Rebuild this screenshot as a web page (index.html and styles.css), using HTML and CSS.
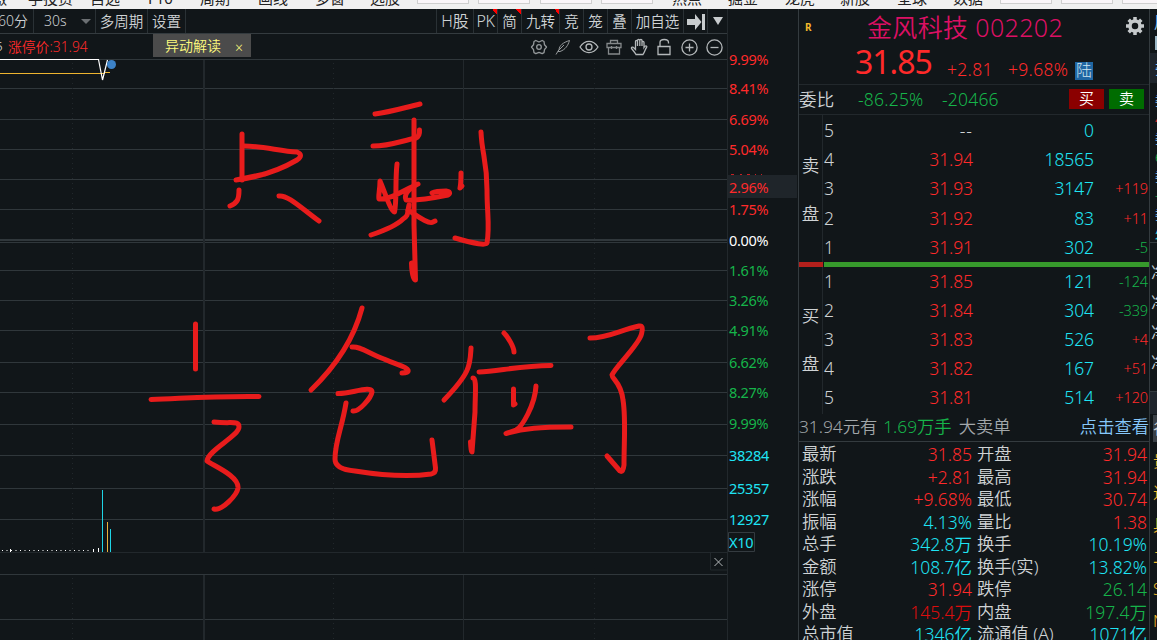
FILE: index.html
```html
<!DOCTYPE html>
<html lang="zh-CN">
<head>
<meta charset="utf-8">
<title>金风科技 002202</title>
<link rel="stylesheet" href="styles.css">
</head>
<body>
<div class="menu">
  <span>激</span><span>手投资</span><span>自选</span><span>F10</span><span>周期</span><span>画线</span><span>多窗</span><span>选股</span>
  <i></i><i></i><i></i><i></i>
  <span>热点</span><span>掘金</span><span>龙虎</span><span>新股</span><span>全球</span><span>数据</span>
  <i></i><i></i><i></i>
</div>
<div class="main">
  <div class="left">
    <div class="toolbar">
      <div class="btn m60">60分</div>
      <div class="btn s30">30s<b class="down gray"></b></div>
      <div class="btn w52">多周期</div>
      <div class="btn w38">设置</div>
      <div class="space"></div>
      <div class="btn first">H股</div>
      <div class="btn w24 new pk">PK</div>
      <div class="btn w24 new">简</div>
      <div class="btn w38 new">九转</div>
      <div class="btn w24">竞</div>
      <div class="btn w24">笼</div>
      <div class="btn w24">叠</div>
      <div class="btn w52">加自选</div>
      <div class="btn w24"><svg width="20" height="18"><path d="M1 6h8V1l6.500 8L9 17v-5H1z" fill="#c8ccce"/><path d="M17.500 1v16" stroke="#c8ccce" stroke-width="3"/></svg></div>
      <div class="btn last"><b class="down"></b></div>
    </div>
    <div class="info">
      <span class="six">5</span><span class="limit">涨停价:31.94</span>
      <div class="tab">异动解读<span>×</span></div>
      <svg class="icons" width="200" height="25" viewBox="525 34 200 25" fill="none" stroke="#b4b8ba" stroke-width="1.300">
        <path d="M535.800 40.500l3.200 1.500 3.200-1.500 1.800 1 .5 3.300 2 2.200-2 2.600-.5 3-1.800 1-3.200-1.300-3.200 1.300-1.800-1-.5-3-2-2.600 2-2.200.5-3.300z" stroke="#95999b" stroke-linejoin="round"/>
        <circle cx="539" cy="47" r="2.300" stroke="#95999b"/>
        <path d="M556 54.500l3-5c.5-4 4-7 10.500-9-1.500 5-4 9-9.500 11h-2M558 51l6-6" stroke="#95999b" stroke-width="1"/>
        <path d="M580 47c5-7.500 13-7.500 18 0-5 7.500-13 7.500-18 0z"/><circle cx="589" cy="47" r="3"/>
        <path d="M607 43.500h14v4h-14zM608.500 47.500v6.500h11v-6.500M610.500 43v-2.500h7V43M611.500 46v3m5-3v3" stroke="#85898b"/>
        <path d="M636 54.500c-1-2-3-4-4.500-6-.5-1.500 1.500-2 2.500-.5l1.500 1.500V41.500c0-1.500 2-1.500 2 0V46v-5.500c0-1.500 2.300-1.500 2.300 0V46v-5.500c0-1.500 2.200-1.500 2.200 0V46v-3.500c0-1.500 2-1.500 2 0v5c2-3 3.500-1 2.500 0-1.500 2-1.500 4-3.500 7z"/>
        <path d="M658 46.500h12v8h-12zM660 46.500v-4c0-4 8.500-4 8.500 0v1"/>
        <circle cx="689.500" cy="47.500" r="7.600"/><path d="M685.500 47.500h8m-4-4v8"/>
        <circle cx="714.500" cy="47.500" r="7.600"/><path d="M710.500 47.500h8"/>
      </svg>
    </div>
    <svg class="chart" width="798" height="581" viewBox="0 59 798 581">
      <g class="grid">
        <path d="M0 59.500H727M0 88.500H727M0 119.500H727M0 149.500H727M0 179.500H727M0 209.500H727M0 242.500H727M0 270.500H727M0 300.500H727M0 330.500H727M0 362.500H727M0 392.500H727M0 424.500H727M0 455.500H727M0 488.500H727M0 519.500H727M0 574.500H727M0 619.500H727"/>
        <path d="M0 240H727" stroke-width="2"/>
        <path class="dim" d="M0 552.500H727M727.500 9V640M463.500 60V552M463.500 575V640M710.500 553V570H727"/>
        <path class="dim" d="M204 60V552M204 575V640" stroke-width="2"/>
        <path class="dim dots" d="M72.500 63V552M333.500 63V552M594.500 63V552M72.500 578V640M333.500 578V640M594.500 578V640"/>
      </g>
      <rect x="728" y="175" width="69" height="23" fill="#1f252a"/>
      <g class="axis up">
        <text x="729" y="65">9.99%</text><text x="729" y="94">8.41%</text><text x="729" y="125">6.69%</text><text x="729" y="155">5.04%</text>
        <text x="729" y="193">2.96%</text><text x="729" y="215">1.75%</text>
      </g>
      <path d="M731 174.500h3m6 0h2m5 0h3m5 0h1m5 0h1" stroke="#c62023"/>
      <g class="axis"><text x="729" y="246">0.00%</text></g>
      <g class="axis dn">
        <text x="729" y="276">1.61%</text><text x="729" y="306">3.26%</text><text x="729" y="336">4.91%</text><text x="729" y="368">6.62%</text><text x="729" y="398">8.27%</text><text x="729" y="429">9.99%</text>
      </g>
      <g class="axis vol">
        <text x="729" y="461">38284</text><text x="729" y="494">25357</text><text x="729" y="525">12927</text><text x="729" y="548">X10</text>
      </g>
      <path d="M728.500 532.500h26v19h-26z" fill="none" stroke="#343b40"/>
      <path d="M714.500 558l8 8m0-8l-8 8" stroke="#b5b9bb"/>
      <!-- price line -->
      <path d="M0 73.500H105M105 72.500h5" stroke="#eeb42f"/>
      <path d="M0 59.500H98.500L102.500 80 107.500 60" fill="none" stroke="#fff" stroke-width="1.200"/>
      <circle cx="111.500" cy="64.500" r="4.500" fill="#3c82c8"/>
      <!-- volume -->
      <path d="M2 550.500H92" stroke="#fff" stroke-dasharray="1 3.500"/>
      <path d="M10.500 549v3M93.500 549v3M98.500 548v4" stroke="#fff"/>
      <path d="M102.500 490v62M110.500 529v23" stroke="#1fd5e6"/><path d="M107.500 522v30" stroke="#e9b23a"/>
      <!-- pen marks -->
      <g class="ink">
        <path d="M242 134V180"/><path d="M244 146C262 146 280 151 297 152Q304 155 297 160C280 170 260 177 236 180L265 174"/>
        <path d="M239 190C239 200 237 203 230 206"/><path d="M279 196C288 195 300 207 319 221"/>
        <path d="M375 114C391 112 403 108 420 104"/><path d="M373 146C390 146 401 141 416 138Q420 136 419.500 130"/>
        <path d="M414 120V225L415.500 280Q412 280 411.500 263"/>
        <path d="M397 164C395 182 397 200 394.500 212C391 212 384 190 380 181C380 190 378 197 379 199C390 200 404 190 418 184C411 187 403 194 406 200C420 201 438 197 448 195Q452 192 446 191Q436 191 432 193"/>
        <path d="M409 205C407 214 409 215 403 219C397 225 383 231 371 235"/><path d="M408 210C416 215 429 225 433 222L435 221"/>
        <path d="M461 173C461 180 461 184 460 188L462 186"/><path d="M481 132C482 155 487 160 487 190C487 215 490 225 487 243Q486 247 455 238"/>
        <path d="M195.500 324V369"/><path d="M151 399.500C190 398 210 396 259 396.500"/>
        <path d="M214 422C232 424 239 420 239 427C239 436 208 450 207 461C214 466 239 476 238 488C237 495 222 511 214 509"/>
        <path d="M362 308C354 338 337 365 311 390"/><path d="M352 347C360 346 368 353 384 359C397 365 406 366 408 370Q409 373 402 373"/>
        <path d="M338 393.500C350 394 372 385 372 392C371 398 359 412 353 411"/><path d="M346 403C342 428 335 441 335 459C335 467 343 470 355 471C380 475 410 477 431 474Q436 473 435.500 468L432 440"/>
        <path d="M471 348C470 365 471 372 444 400"/><path d="M473 378C477 378 475 395 475 412L472 452Q471 452 470.500 442"/>
        <path d="M504 333C508 337 514 347 514 352"/><path d="M479 372C499 371 519 366 551 365.500"/>
        <path d="M513.500 389V405L515 404"/><path d="M536 386C535 405 522 427 516 430L506 433.500C525 428 540 427 571 427"/>
        <path d="M590 338C608 338 620 330 639 326Q644 325 641.500 334C639 345 615 367 612 375C612 379 621 382 623 400C626 418 624 440 624 465Q623 473 620 471L607 456"/>
      </g>
    </svg>
  </div>
  <div class="quote">
    <div class="head">
      <div class="name"><em>R</em><span>金风科技 002202</span>
        <svg width="20" height="20" viewBox="-10 -10 20 20"><circle r="5" fill="none" stroke="#c5c9cb" stroke-width="3.500"/><path d="M0-9V-5M0 9V5M-9 0H-5M9 0H5M-6.300-6.300L-4-4M6.300 6.300L4 4M6.300-6.300L4-4M-6.300 6.300L-4 4" stroke="#c5c9cb" stroke-width="3.500"/></svg>
      </div>
      <div class="price"><strong>31.85</strong><span class="chg">+2.81</span><span class="pct">+9.68%</span><b>陆</b></div>
    </div>
    <div class="ratio"><span>委比</span><span class="g r1">-86.25%</span><span class="g">-20466</span><div class="buy">买</div><div class="sell">卖</div></div>
    <div class="book">
      <div class="side"><span>卖</span><span>盘</span></div>
      <div class="rows">
        <div><span>5</span><span class="w">--</span><span>0</span><span></span></div>
        <div><span>4</span><span>31.94</span><span>18565</span><span></span></div>
        <div><span>3</span><span>31.93</span><span>3147</span><span>+119</span></div>
        <div><span>2</span><span>31.92</span><span>83</span><span>+11</span></div>
        <div><span>1</span><span>31.91</span><span>302</span><span class="g">-5</span></div>
      </div>
    </div>
    <div class="bar"><i></i></div>
    <div class="book bids">
      <div class="side"><span>买</span><span>盘</span></div>
      <div class="rows">
        <div><span>1</span><span>31.85</span><span>121</span><span class="g">-124</span></div>
        <div><span>2</span><span>31.84</span><span>304</span><span class="g">-339</span></div>
        <div><span>3</span><span>31.83</span><span>526</span><span>+4</span></div>
        <div><span>4</span><span>31.82</span><span>167</span><span>+51</span></div>
        <div><span>5</span><span>31.81</span><span>514</span><span>+120</span></div>
      </div>
    </div>
    <div class="notice"><span>31.94元有</span><span class="g">1.69万手</span><span>大卖单</span><a>点击查看</a></div>
    <div class="stats">
      <span>最新</span><span class="r">31.85</span><span>开盘</span><span class="r">31.94</span>
      <span>涨跌</span><span class="r">+2.81</span><span>最高</span><span class="r">31.94</span>
      <span>涨幅</span><span class="r">+9.68%</span><span>最低</span><span class="r">30.74</span>
      <span>振幅</span><span class="c">4.13%</span><span>量比</span><span class="r">1.38</span>
      <span>总手</span><span class="c">342.8万</span><span>换手</span><span class="c">10.19%</span>
      <span>金额</span><span class="c">108.7亿</span><span>换手(实)</span><span class="c">13.82%</span>
      <span>涨停</span><span class="r">31.94</span><span>跌停</span><span class="g">26.14</span>
      <span>外盘</span><span class="dr">145.4万</span><span>内盘</span><span class="g">197.4万</span>
      <span>总市值</span><span class="c">1346亿</span><span>流通值 (A)</span><span class="c">1071亿</span>
    </div>
  </div>
  <div class="strip">
    <div class="s1">周</div><div class="s2"></div><div class="s3">委</div>
    <div class="s4"><span>委</span><span class="r">4</span><span>委</span><span class="g">6</span><span>委</span><span class="g">-</span><span>委</span><span class="c">处</span></div>
    <div class="s5"><span>净</span><span>净</span><span>净</span><span>净</span></div>
    <div class="s6"></div><div class="s7">谷</div>
    <div class="s8"><span>贵</span><span>近</span><span>具</span><span>二</span><span>S</span><span>N</span></div>
  </div>
</div>
</body>
</html>
```
FILE: styles.css
```css
* { box-sizing: border-box; }
body {
  margin: 0;
  width: 1157px;
  height: 640px;
  overflow: hidden;
  background: #111619;
  color: #cfd3d5;
  font-family: "Noto Sans", "Noto Sans CJK SC", sans-serif;
  font-weight: 360;
}
i, em { font-style: normal; }
.r { color: #ff2a2a; }
.g { color: #16b44a; }
.c { color: #1fe4f4; }
.dr { color: #dc0d0d; }

/* top menu */
.menu {
  display: grid;
  grid-template-columns: 28px 62px 58px 52px 58px 57px 55px 47px 61px 62px 61px 71px 56px 57px 55px 57px 56px 47px 61px 61px 61px;
  height: 9px;
  overflow: hidden;
  background: #f0f0f0;
  color: #222;
  font-size: 15px;
  font-weight: 400;
}
.menu span { line-height: 20px; margin-top: -12px; white-space: nowrap; }
.menu span:first-child { margin-left: -8px; }
.menu i { width: 52px; height: 4px; background: #faf6f9; border: 1px solid #cfcfcf; border-top: 0; }

.main { display: flex; height: 631px; }
.left { width: 798px; }
.toolbar {
  display: flex;
  width: 727px;
  height: 25px;
  border-bottom: 1px solid #343b3f;
  font-size: 14.5px;
}
.btn {
  display: flex;
  align-items: center;
  justify-content: center;
  border-right: 1px solid #2a3135;
  line-height: 24px;
  white-space: nowrap;
}
.btn svg { flex: none; margin-top: 1px; }
.m60 { width: 34px; justify-content: flex-end; padding-right: 5px; font-size: 14px; }
.s30 { width: 62px; justify-content: space-between; padding: 0 4px 0 10px; font-size: 14px; }
.w52 { width: 52px; }
.w38 { width: 38px; }
.w24 { width: 24px; }
.first { width: 38px; border-left: 1px solid #2a3135; font-size: 16px; }
.pk { letter-spacing: -.5px; font-size: 16px; }
.last { width: 19px; border: 0; }
.space { flex: 1; }
.new { background: linear-gradient(45deg, transparent 50%, #f00 50%) right top / 5px 5px no-repeat; }
.down { border: 5px solid transparent; border-top: 8px solid #c8ccce; border-bottom: 0; }
.down.gray { border-top: 5px solid #6b6f72; }
.info { display: flex; height: 25px; font-size: 13.5px; line-height: 25px; }
.six { width: 8px; margin-left: -5px; color: #ddd; }
.limit { width: 150px; padding-left: 5px; color: #ff2a2a; font-size: 13.8px; }
.tab {
  display: flex;
  justify-content: space-between;
  width: 98px;
  height: 23px;
  padding: 0 8px 0 12px;
  background: #4b4b4b;
  color: #fdfb7e;
  font-size: 14px;
  line-height: 23px;
}
.tab span { font-size: 14px; padding-top: 2px; }
.icons { margin-left: 274px; }
.chart { display: block; overflow: visible; }
.grid path { fill: none; stroke: #30373b; }
.grid .dim { stroke: #22282c; }
.grid .dots { stroke-dasharray: 1 4; }
.axis { font-size: 14.5px; font-weight: 380; letter-spacing: -.3px; fill: #fff; }
.axis.up { fill: #ff2a2a; }
.axis.dn { fill: #16b44a; }
.axis.vol { fill: #1fe4f4; }
.ink path { fill: none; stroke: #e81c1c; stroke-width: 5; stroke-linecap: round; stroke-linejoin: round; }

/* quote panel */
.quote { width: 352px; border: 1px solid #343b3f; border-width: 0 1px; font-size: 17.5px; }
.head { height: 76px; border-bottom: 1px solid #22282c; }
.name { display: flex; align-items: center; height: 35px; padding: 0 4px 0 6px; }
.name em { width: 62px; color: #f2b82c; font-size: 10px; font-weight: 700; }
.name span { flex: 1; margin-top: -2px; color: #dc1064; font-size: 25px; letter-spacing: .35px; white-space: nowrap; }
.name svg { margin-top: -2px; }
.price { display: flex; align-items: flex-end; height: 36px; padding-left: 56px; color: #ff2a2a; line-height: 21px; }
.price strong { width: 92px; font-size: 32px; font-weight: 380; letter-spacing: -1px; line-height: 37px; }
.chg { width: 61px; letter-spacing: .3px; }
.pct { width: 67px; letter-spacing: .3px; white-space: nowrap; }
.price b { width: 18px; height: 18px; background: #1f66a3; color: #cfe2ee; font-size: 16px; font-weight: 300; line-height: 17px; text-align: center; }
.ratio { display: flex; align-items: center; height: 30px; padding-bottom: 1px; border-bottom: 1px solid #22282c; }
.ratio span { margin-top: -1px; letter-spacing: .2px; }
.ratio > span:first-child { width: 59px; }
.ratio .r1 { width: 84px; }
.ratio div { width: 35px; height: 20px; color: #fff; font-size: 15px; line-height: 19px; text-align: center; }
.ratio .buy { margin-left: auto; background: #8b0000; }
.ratio .sell { margin: 0 5px; background: #006c00; }
.book { display: flex; height: 147px; }
.side { display: flex; flex-direction: column; align-items: center; width: 24px; padding-top: 26px; border-right: 1px solid #22282c; line-height: 48px; }
.rows { flex: 1; letter-spacing: -.1px; }
.rows div { display: grid; grid-template-columns: 40px 110px 121px 54px; height: 29.200px; line-height: 30px; }
.rows span { text-align: right; color: #ff2a2a; }
.rows span:first-child { padding-left: 1px; text-align: left; color: #cfd3d5; }
.rows span:nth-child(3) { color: #1fe4f4; }
.rows span:nth-child(4) { font-size: 14.5px; }
.rows .w { color: #cfd3d5; letter-spacing: 1px; }
.rows span.g { color: #16b44a; }
.bar { height: 5px; padding-left: 24px; background: linear-gradient(90deg, #b4201c 24px, transparent 24px); }
.bar i { display: block; height: 5px; margin-left: 1px; background: #379a2c; }
.bids .side { padding-top: 24px; }
.bids .rows { margin-top: -1px; }
.bids .rows div { height: 29px; }
.notice { display: flex; height: 28px; border-bottom: 1px solid #343b3f; color: #a2a7aa; font-size: 17.3px; line-height: 26px; white-space: nowrap; }
.notice .g { margin: 0 7px 0 6px; }
.notice a { margin-left: auto; color: #86c8fb; }
.stats {
  display: grid;
  grid-template-columns: 50px 120px 91px 84px;
  grid-auto-rows: 22.500px;
  padding: 1px 2px 0 3px;
  line-height: 22.500px;
  white-space: nowrap;
}
.stats span:nth-child(even) { text-align: right; }
.stats span:nth-child(4n+3) { padding-left: 5px; }
.stats span:nth-child(odd) { font-size: 17.3px; }

/* neighbour panel, mostly off the edge */
.strip { width: 7px; overflow: hidden; font-size: 16px; }
.strip span { display: block; }
.s1 { height: 27px; padding-left: 4px; color: #86c8fb; line-height: 27px; }
.s2 { height: 14px; margin-left: 5px; background: #9bb7c6; }
.s3 { height: 30px; margin-top: 3px; padding-left: 5px; background: #1f252c; color: #86c8fb; line-height: 30px; }
.s4 { height: 160px; padding: 8px 0 0 5px; border-bottom: 1px solid #343b3f; color: #86c8fb; font-size: 13px; line-height: 19px; }
.s5 { height: 148px; padding: 14px 0 0 1px; line-height: 30px; }
.s6 { height: 23px; background: #1f252c; border-top: 1px solid #343b3f; }
.s7 { height: 27px; margin: 1px 0 0 3px; background: #3a4046; line-height: 27px; }
.s8 { padding: 3px 0 0 3px; color: #f2b82c; line-height: 32px; }
```
